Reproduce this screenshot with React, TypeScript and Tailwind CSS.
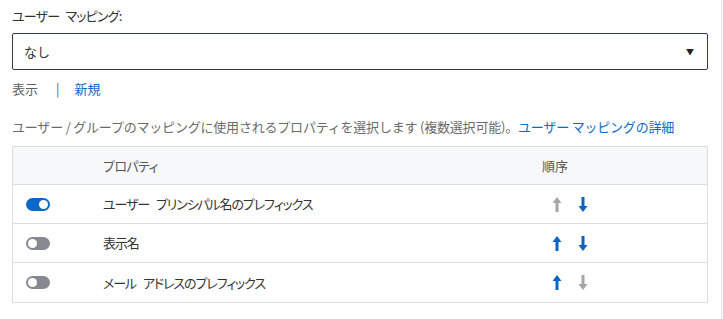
import React from 'react';

const font = { fontFamily: '"Segoe UI", "Noto Sans CJK JP", sans-serif' };

type Row = { name: string; on: boolean; up: boolean; down: boolean };

const rows: Row[] = [
  { name: 'ユーザー プリンシパル名のプレフィックス', on: true, up: false, down: true },
  { name: '表示名', on: false, up: true, down: true },
  { name: 'メール アドレスのプレフィックス', on: false, up: true, down: false },
];

const Arrow: React.FC<{ dir: 'up' | 'down'; active: boolean }> = ({ dir, active }) => (
  <svg width="10" height="15" viewBox="0 0 10 15" className={active ? 'text-[#0b64c0]' : 'text-[#a6a6a6]'}>
    {dir === 'up' ? (
      <path d="M5 0 L9.5 6 L6.5 6 L6.5 15 L3.5 15 L3.5 6 L0.5 6 Z" fill="currentColor" />
    ) : (
      <path d="M5 15 L9.5 9 L6.5 9 L6.5 0 L3.5 0 L3.5 9 L0.5 9 Z" fill="currentColor" />
    )}
  </svg>
);

const Toggle: React.FC<{ on: boolean }> = ({ on }) => (
  <div
    className={`w-[24px] h-[13px] rounded-full flex items-center px-[2px] ${
      on ? 'bg-[#0b6ac9] justify-end' : 'bg-[#868a90] justify-start'
    }`}
  >
    <div className="w-[9px] h-[9px] rounded-full bg-white" />
  </div>
);

export default function App() {
  return (
    <div className="w-[723px] h-[319px] bg-white flex text-[13px] text-[#323130]" style={font}>
      <div className="flex-1 pl-[12px] pr-[13px]">
        <div className="pt-[6px] h-[33px] [font-feature-settings:'palt'] tracking-[-0.8px] [word-spacing:4px]">
          ユーザー マッピング:
        </div>
        <div className="h-[37px] border border-[#2e3a48] rounded-[2px] flex items-center justify-between pl-[11px] pr-[13px]">
          <span>なし</span>
          <span className="text-[8px] text-[#222]">▼</span>
        </div>
        <div className="h-[38px] flex items-center text-[#5f5f5f]">
          <span>表示</span>
          <span className="ml-[18px] text-[#666]">|</span>
          <a className="ml-[15px] text-[#0b6ac9]">新規</a>
        </div>
        <div className="h-[38px] flex items-center text-[#6b6b6b] tracking-[-0.2px]">
          ユーザー / グループのマッピングに使用されるプロパティを選択します (複数選択可能)。
          <a className="text-[#0b6ac9]">ユーザー マッピングの詳細</a>
        </div>
        <div className="border border-[#dcdcdc] [font-feature-settings:'palt']">
          <div className="h-[38px] bg-[#f7f8fa] flex items-center border-b border-[#dcdcdc] text-[#555]">
            <div className="w-[90px]" />
            <div className="flex-1 tracking-[-0.6px]">プロパティ</div>
            <div className="w-[183px] pl-[18px]">順序</div>
          </div>
          {rows.map((r, i) => (
            <div
              key={i}
              className={`h-[39px] flex items-center ${i < rows.length - 1 ? 'border-b border-[#dcdcdc]' : ''}`}
            >
              <div className="w-[90px] pl-[13px]">
                <Toggle on={r.on} />
              </div>
              <div className="flex-1 text-[#333] tracking-[-1.1px] [word-spacing:5px]">{r.name}</div>
              <div className="w-[183px] pl-[28px] flex items-center gap-[16px]">
                <Arrow dir="up" active={r.up} />
                <Arrow dir="down" active={r.down} />
              </div>
            </div>
          ))}
        </div>
      </div>
      <div className="w-px bg-[#e3e3e3] mr-[1px]" />
    </div>
  );
}
